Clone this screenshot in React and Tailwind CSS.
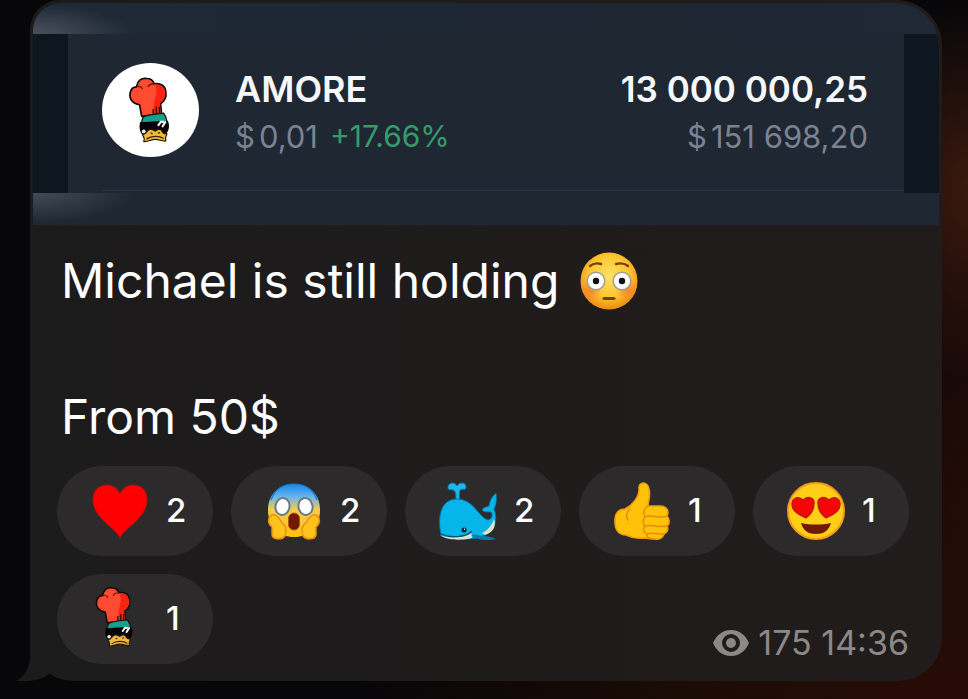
import React from "react";

function ChefDuck({ className }) {
  return (
    <svg viewBox="0 0 40 64" className={className} aria-hidden="true">
      <path d="M13 38 L11 27 C4 26 1 21 2 16 C3 11 6 10 8 10 C9 4 13 1 18 2 C22 2 24 4 25 7 C31 6 36 9 36 15 C37 21 34 24 31 26 L32 36 Z" fill="#ff4b32" stroke="#120808" strokeWidth="1.6" strokeLinejoin="round" />
      <path d="M25 7.500 C31 7 35 10 35.200 15 C36 20 33 24 30.500 25 L31 35.500 L24 36 C25 30 24 26 26 20 C28 15 27 10 25 7.500Z" fill="#f82412" />
      <path d="M8 10 C11 9 13 10 14 12 M25 7 C22 7 20 8 19 10" fill="none" stroke="#6d1209" strokeWidth="1.200" />
      <path d="M24 36 V31 M27 36 V29 M30 35 V29" stroke="#170707" strokeWidth="1.200" />
      <path d="M13 45 C13 40 14 38 17 37.500 C23 36 29 35.500 34 35 C36 38 37 41 37.500 44 Z" fill="#18a08c" stroke="#0b1616" strokeWidth="1.200" />
      <path d="M11.500 43.500 C20 43.500 30 42 38 42.500 C40 47 39 52 36 55 L14 56 C11 53 10.500 48 11.500 43.500Z" fill="#050507" />
      <path d="M29 46.500 l2.500 -3.500 M33 47.500 l2.500 -4 M33 43.500 l.5 -.5" stroke="#fff" strokeWidth="2" strokeLinecap="round" />
      <circle cx="15" cy="52.500" r="1.900" fill="#e9eef0" />
      <path d="M14 55 C18 55.500 17 51 21 50.500 C24 50 25 52 26 52 C28 50 31 50 32 51.500 C33 54 34 55 37 54.500 C37 57 34.500 57.500 36 61.500 C32 62 30 60 26 60 C22 60 19 62.500 15 62 C17 58.500 14 58 14 55Z" fill="#f0b742" stroke="#241405" strokeWidth="1.200" strokeLinejoin="round" />
      <path d="M18 59.500 C22 56.500 30 56.500 33.500 59 M22 54 l1 .5 M29 54 l1 -.5" fill="none" stroke="#3b210b" strokeWidth="1.200" strokeLinecap="round" />
    </svg>
  );
}

function Flushed() {
  return (
    <svg viewBox="0 0 60 60" className="size-[60px]" role="img" aria-label="flushed face">
      <defs>
        <radialGradient id="flushBase" cx=".5" cy=".42" r=".56">
          <stop offset="0" stopColor="#ffe066" />
          <stop offset=".65" stopColor="#fdc62f" />
          <stop offset="1" stopColor="#ee8f16" />
        </radialGradient>
        <radialGradient id="flushCheek">
          <stop offset="0" stopColor="#f4692c" stopOpacity=".65" />
          <stop offset="1" stopColor="#f4692c" stopOpacity="0" />
        </radialGradient>
      </defs>
      <circle cx="30" cy="30" r="28.500" fill="url(#flushBase)" />
      <circle cx="12" cy="39" r="11" fill="url(#flushCheek)" />
      <circle cx="48" cy="39" r="11" fill="url(#flushCheek)" />
      <circle cx="17" cy="30" r="9.500" fill="#a39c8c" />
      <circle cx="43" cy="30" r="9.500" fill="#a39c8c" />
      <circle cx="17" cy="30" r="8" fill="#fbfdff" />
      <circle cx="43" cy="30" r="8" fill="#fbfdff" />
      <circle cx="17" cy="30" r="3.200" fill="#111" />
      <circle cx="43" cy="30" r="3.200" fill="#111" />
      <path d="M11 15 Q16 11 22 13 M37 13 Q44 11 49 15" fill="none" stroke="#75420b" strokeWidth="2.400" strokeLinecap="round" />
      <path d="M25 47.500 H35" stroke="#79440d" strokeWidth="3" strokeLinecap="round" />
    </svg>
  );
}

function Heart() {
  return (
    <svg viewBox="0 0 60 60" className="size-[60px]" aria-hidden="true">
      <path d="M30 57 C26 47 3 37 3 19 C3 9 9 4 17 4 C23 4 28 8 30 13 C32 8 37 4 43 4 C51 4 57 9 57 19 C57 37 34 47 30 57Z" fill="#f00" stroke="#b80d0d" strokeWidth="1" />
    </svg>
  );
}

function Scream() {
  return (
    <svg viewBox="0 0 60 60" className="size-[60px]" aria-hidden="true">
      <defs>
        <linearGradient id="screamFace" x2="0" y2="1">
          <stop offset="0" stopColor="#1687e8" />
          <stop offset=".24" stopColor="#67b5ee" />
          <stop offset=".48" stopColor="#f6cb50" />
          <stop offset="1" stopColor="#ffc20d" />
        </linearGradient>
      </defs>
      <path d="M30 3 C46 3 56 14 56 29 C56 46 45 56 30 56 C15 56 4 46 4 29 C4 14 14 3 30 3Z" fill="url(#screamFace)" />
      <path d="M7 19 C11 8 19 3 30 3 C41 3 49 8 53 19" fill="none" stroke="#1477d5" strokeWidth="1.200" />
      <ellipse cx="18.500" cy="25.500" rx="7" ry="8.500" transform="rotate(12 18.500 25.500)" fill="#fff" stroke="#697984" strokeWidth="2" />
      <ellipse cx="41.500" cy="25.500" rx="7" ry="8.500" transform="rotate(-12 41.500 25.500)" fill="#fff" stroke="#697984" strokeWidth="2" />
      <rect x="24.500" y="32" width="11" height="17" rx="5.500" fill="#711905" stroke="#b45406" />
      <path d="M8 34 C12 33 16 38 18 42 C22 44 23 49 21 55 C18 59 9 59 8 54 L8 46 C3 42 4 36 8 34Z M52 34 C48 33 44 38 42 42 C38 44 37 49 39 55 C42 59 51 59 52 54 L52 46 C57 42 56 36 52 34Z" fill="#ffc31b" stroke="#ee8e12" strokeWidth="1.500" />
    </svg>
  );
}

function Whale() {
  return (
    <svg viewBox="0 0 60 60" className="size-[60px]" aria-hidden="true">
      <path d="M18 20 C18 13 18 10 15 9 C12 8 10 10 10 6 C11 1 17 1 19 5 C21 1 28 1 28 6 C28 10 25 7 22 9 C21 12 21 17 22 20Z" fill="#20b6e8" stroke="#0b7fb3" />
      <path d="M3 54 C-1 35 3 18 19 18 C36 18 40 36 50 39 C54 38 55 34 53 31 C49 31 45 31 44 29 C45 26 49 26 51 25 C52 18 55 15 58 12 C59 20 58 24 56 28 C58 32 59 41 55 47 C50 55 39 59 20 58 C11 57 6 57 3 54Z" fill="#06b5e9" stroke="#086c9d" strokeWidth="1" />
      <path d="M2 54 C11 58 26 57 33 51 L34 57 C23 60 7 59 2 54Z M44 52 C51 49 54 43 56 38 C59 46 54 52 47 54Z" fill="#dae2d2" />
      <path d="M34 53 C39 55 50 54 58 58 C51 60 39 59 35 56Z" fill="#087bb0" />
      <path d="M3 53 C12 57 28 57 34 50" fill="none" stroke="#064d72" strokeWidth="1.300" />
      <circle cx="26" cy="49" r="2.500" fill="#06202d" />
      <circle cx="26.500" cy="48.200" r=".7" fill="#fff" />
    </svg>
  );
}

function ThumbUp() {
  return (
    <svg viewBox="0 0 60 60" className="size-[60px]" aria-hidden="true">
      <path d="M13 28 C21 24 27 16 27 8 C26 0 36 0 37 8 C39 15 36 21 36 25 L49 25 C56 26 57 31 55 35 C58 38 58 43 55 45 C57 48 55 52 52 53 C51 57 47 59 42 58 L31 57 C24 58 18 56 14 54 C7 54 3 49 3 41 C2 32 7 28 13 28Z" fill="#ffc20a" stroke="#f39b0c" strokeWidth="1.500" />
      <path d="M36 25 C32 27 31 32 33 36 C30 39 31 43 33 45 C30 48 32 52 35 53 C34 57 38 58 42 58 M33 36 C39 33 47 38 55 35 M33 45 C40 43 47 47 55 45 M35 53 C41 51 48 54 52 53 M18 28 C14 31 14 36 16 39" fill="none" stroke="#e88a08" strokeWidth="1.500" strokeLinecap="round" />
    </svg>
  );
}

function HeartEyes() {
  return (
    <svg viewBox="0 0 60 60" className="size-[60px]" aria-hidden="true">
      <circle cx="30" cy="30" r="28" fill="#ffce17" stroke="#f7991c" strokeWidth="2" />
      <path d="M20 37 C11 33 5 29 6 22 C7 16 13 15 17 19 C22 14 29 17 28 23 C28 29 24 34 20 37Z M40 37 C36 34 32 29 32 23 C31 17 38 14 43 19 C47 15 53 16 54 22 C55 29 49 33 40 37Z" fill="#f40606" stroke="#b61b08" strokeWidth="1.200" />
      <path d="M15 42 C24 44 36 44 45 42 C43 50 37 53 30 53 C23 53 17 50 15 42Z" fill="#6f1b04" />
    </svg>
  );
}

function Eye() {
  return (
    <svg viewBox="0 0 38 28" className="mr-2 h-7 w-[38px]" role="img" aria-label="views">
      <path fillRule="evenodd" d="M19 1 C10 1 4 7 1 14 C4 21 10 27 19 27 C28 27 34 21 37 14 C34 7 28 1 19 1Z M19 5 A9 9 0 1 1 19 23 A9 9 0 0 1 19 5Z" fill="#8b8888" />
      <circle cx="19" cy="14" r="5" fill="#8b8888" />
    </svg>
  );
}

const reactions = [
  { name: "heart", count: 2, icon: <Heart /> },
  { name: "scream", count: 2, icon: <Scream /> },
  { name: "whale", count: 2, icon: <Whale /> },
  { name: "thumbs up", count: 1, icon: <ThumbUp /> },
  { name: "heart eyes", count: 1, icon: <HeartEyes /> },
  { name: "chef duck", count: 1, icon: <ChefDuck className="ml-1 mb-1 h-[62px] w-[40px]" /> },
];

function TokenCard() {
  return (
    <section className="mx-[3px] overflow-hidden rounded-tl-[28px] rounded-tr-[44px] bg-[#1e2732]">
      <div className="h-[31px] bg-[radial-gradient(ellipse_100px_30px_at_0%_100%,#4a515c,transparent),linear-gradient(90deg,#1e2935,#1e2732_70%,#202736)]" />
      <div className="border-l-[35px] border-r-[35px] border-[#0e161f] pb-0.5 pl-[34px]">
        <div className="flex h-[157px] items-center border-b border-[#2b3440] pr-9">
          <div className="mb-1 flex h-[94px] w-[97px] shrink-0 items-center justify-center rounded-[50%] bg-white">
            <ChefDuck className="mr-1 h-[68px] w-[42px]" />
          </div>
          <div className="ml-9 flex grow justify-between whitespace-nowrap pt-0.5">
            <div>
              <h1 className="text-[36px] font-semibold leading-[47px] text-[#f5f7fa]">AMORE</h1>
              <p className="flex gap-1 text-[31px] leading-[47px] text-[#7b8292]">
                <span>$</span>
                <span>0,01</span>
                <span className="ml-2 text-[30px] text-[#359b6b]">+17.66%</span>
              </p>
            </div>
            <div className="text-right">
              <p className="text-[35px] font-semibold leading-[47px] text-[#f5f7fa]">13 000 000,25</p>
              <p className="flex justify-end gap-1 text-[31px] leading-[47px] text-[#7b8292]">
                <span>$</span>
                <span>151 698,20</span>
              </p>
            </div>
          </div>
        </div>
      </div>
      <div className="h-8 bg-[#1e2732] bg-[radial-gradient(ellipse_100px_30px_at_0%_0%,#434b56,transparent)]" />
    </section>
  );
}

export default function App() {
  return (
    <main className="min-h-screen overflow-hidden bg-[#070609] bg-[radial-gradient(ellipse_120px_190px_at_100%_27%,#3b190d,transparent),radial-gradient(ellipse_120px_400px_at_100%_75%,#250c06,transparent),radial-gradient(ellipse_620px_200px_at_100%_100%,#2b0b08,#1b0c05_45%,transparent)] pl-[30px] pr-[26px] font-['Inter','Liberation_Sans',sans-serif]">
      <article className="relative rounded-bl-[44px] rounded-br-[44px] rounded-tl-[30px] rounded-tr-[46px] bg-linear-to-r from-[#1c1b1c] to-[#211c1b] pt-[3px]">
        <svg viewBox="0 0 44 64" className="absolute -left-[14px] bottom-0 h-16 w-11" aria-hidden="true">
          <path d="M14 0 V40 C14 51 9 59 0 64 C13 65 27 63 34 56 L44 30 V0Z" fill="#1c1b1c" />
        </svg>
        <TokenCard />
        <div className="relative pb-[17px] pl-[27px] pr-[33px] pt-[22px]">
          <div className="pl-1 text-[48px] leading-[68px] text-white">
            <p className="flex items-center gap-5">Michael is still holding <Flushed /></p>
            <p className="mt-[68px]">From 50$</p>
          </div>
          <div className="mt-[15px] flex flex-wrap gap-[18px]">
            {reactions.map((reaction) => (
              <button key={reaction.name} type="button" aria-label={`${reaction.name} ${reaction.count}`} className="flex h-[90px] w-[156px] items-center rounded-full bg-[#2c2a2b] pl-[33px] text-[33px] font-medium text-white">
                <span className="mr-4 flex w-[60px] shrink-0">{reaction.icon}</span>
                {reaction.count}
              </button>
            ))}
            <p className="ml-auto flex items-center self-end text-[34px] leading-[42px] text-[#8b8888]">
              <Eye />175 14:36
            </p>
          </div>
        </div>
      </article>
    </main>
  );
}
